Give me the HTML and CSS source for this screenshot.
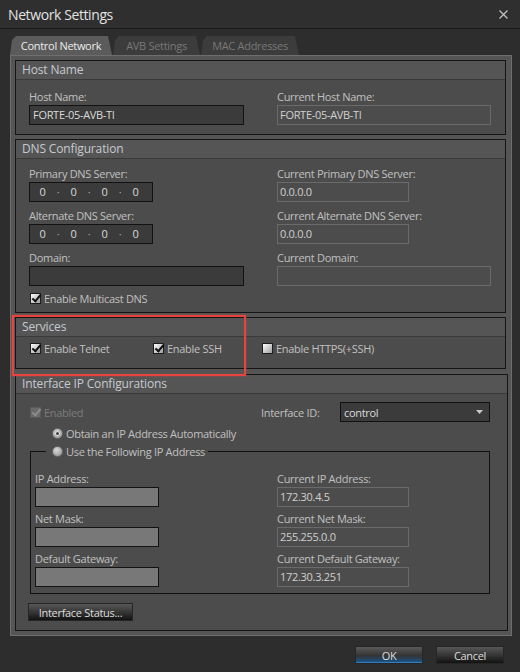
FILE: index.html
```html
<!DOCTYPE html>
<html lang="en">
<head>
    <meta charset="UTF-8">
    <meta name="viewport" content="width=device-width, initial-scale=1.0">
    <title>Network Settings</title>
    <link rel="stylesheet" href="styles.css">
</head>
<body>
<div class="window">
    <div class="titlebar">
        <span class="title">Network Settings</span>
        <svg class="close" width="9" height="9" viewBox="0 0 9 9"><path d="M0.5 0.5L8.5 8.5M8.5 0.5L0.5 8.5" stroke="#c4c4c4" stroke-width="1.2"/></svg>
    </div>

    <div class="tabs">
        <div class="tab active">Control Network</div>
        <div class="tab">AVB Settings</div>
        <div class="tab">MAC Addresses</div>
    </div>

    <div class="panel">
        <!-- Host Name -->
        <section class="group">
            <div class="group-title">Host Name</div>
            <div class="group-body cols host">
                <div class="field">
                    <label>Host Name:</label>
                    <div class="input edit long">FORTE-05-AVB-TI</div>
                </div>
                <div class="field">
                    <label>Current Host Name:</label>
                    <div class="input ro long-r">FORTE-05-AVB-TI</div>
                </div>
            </div>
        </section>

        <!-- DNS Configuration -->
        <section class="group">
            <div class="group-title">DNS Configuration</div>
            <div class="group-body cols dns">
                <div class="col">
                    <div class="field">
                        <label>Primary DNS Server:</label>
                        <div class="input edit ip"><span>0</span><i>·</i><span>0</span><i>·</i><span>0</span><i>·</i><span>0</span></div>
                    </div>
                    <div class="field">
                        <label>Alternate DNS Server:</label>
                        <div class="input edit ip"><span>0</span><i>·</i><span>0</span><i>·</i><span>0</span><i>·</i><span>0</span></div>
                    </div>
                    <div class="field">
                        <label>Domain:</label>
                        <div class="input edit long"></div>
                    </div>
                    <div class="check on mdns"><span class="box"></span>Enable Multicast DNS</div>
                </div>
                <div class="col">
                    <div class="field">
                        <label>Current Primary DNS Server:</label>
                        <div class="input ro short">0.0.0.0</div>
                    </div>
                    <div class="field">
                        <label>Current Alternate DNS Server:</label>
                        <div class="input ro short">0.0.0.0</div>
                    </div>
                    <div class="field">
                        <label>Current Domain:</label>
                        <div class="input ro long-r"></div>
                    </div>
                </div>
            </div>
        </section>

        <!-- Services -->
        <section class="group services">
            <div class="group-title">Services</div>
            <div class="group-body svc">
                <div class="check on"><span class="box"></span>Enable Telnet</div>
                <div class="check on"><span class="box"></span>Enable SSH</div>
                <div class="check"><span class="box"></span>Enable HTTPS(+SSH)</div>
            </div>
            <div class="highlight"></div>
        </section>

        <!-- Interface IP Configurations -->
        <section class="group iface">
            <div class="group-title">Interface IP Configurations</div>
            <div class="group-body">
                <div class="iface-row">
                    <div class="check on disabled"><span class="box"></span>Enabled</div>
                    <span class="label">Interface ID:</span>
                    <div class="select">
                        <span>control</span>
                        <svg width="7" height="4" viewBox="0 0 7 4"><path d="M0 0H7L3.5 4Z" fill="#c8c8c8"/></svg>
                    </div>
                </div>
                <div class="radio-row"><span class="radio on"></span>Obtain an IP Address Automatically</div>
                <fieldset class="static">
                    <legend><span class="radio"></span>Use the Following IP Address</legend>
                    <div class="cols static-cols">
                        <div class="col">
                            <div class="field">
                                <label>IP Address:</label>
                                <div class="input off">&nbsp;</div>
                            </div>
                            <div class="field">
                                <label>Net Mask:</label>
                                <div class="input off">&nbsp;</div>
                            </div>
                            <div class="field">
                                <label>Default Gateway:</label>
                                <div class="input off">&nbsp;</div>
                            </div>
                        </div>
                        <div class="col">
                            <div class="field">
                                <label>Current IP Address:</label>
                                <div class="input ro short">172.30.4.5</div>
                            </div>
                            <div class="field">
                                <label>Current Net Mask:</label>
                                <div class="input ro short">255.255.0.0</div>
                            </div>
                            <div class="field">
                                <label>Current Default Gateway:</label>
                                <div class="input ro short">172.30.3.251</div>
                            </div>
                        </div>
                    </div>
                </fieldset>
                <button class="btn status">Interface Status...</button>
            </div>
        </section>
    </div>

    <div class="footer">
        <button class="btn ok">OK</button>
        <button class="btn">Cancel</button>
    </div>
</div>
</body>
</html>
```

FILE: styles.css
```css
body {
    margin: 0;
    background-color: #2d2d2d;
    font-family: "Open Sans", "Noto Sans", sans-serif;
    font-size: 11px;
    letter-spacing: -0.3px;
    color: #c0c0c0;
}

.window {
    width: 520px;
    height: 672px;
    background-color: #2d2d2d;
    position: relative;
    overflow: hidden;
}

/* title bar */
.titlebar {
    height: 28px;
    border-bottom: 1px solid #1a1a1a;
    background-color: #2f2f2f;
    display: flex;
    align-items: center;
    justify-content: space-between;
    padding: 0 12px 0 8px;
}

.title {
    font-size: 14px;
    letter-spacing: -0.4px;
    color: #e2e2e2;
}

/* tabs */
.tabs {
    display: flex;
    gap: 1px;
    padding: 7px 0 0 10px;
}

.tab {
    height: 19px;
    line-height: 19px;
    text-align: center;
    background-color: #3c3c3c;
    color: #787878;
    clip-path: polygon(0 100%, 2px 4px, 6px 0, calc(100% - 4px) 0, 100% 100%);
}

.tab:nth-child(1) { width: 102px; }
.tab:nth-child(2) { width: 87px; }
.tab:nth-child(3) { width: 98px; }

.tab.active {
    background-color: #5b5b5b;
    color: #ececec;
}

/* tab panel */
.panel {
    margin: 0 8px 0 10px;
    border: 1px solid #6e6e6e;
    background-color: #555;
    padding: 4px 5px 4px 4px;
    display: flex;
    flex-direction: column;
    gap: 4px;
}

.group {
    border: 1px solid #151515;
    background-color: #4c4c4c;
}

.group-title {
    height: 18px;
    line-height: 18px;
    padding-left: 6px;
    border-bottom: 1px solid #3a3a3a;
    background-color: #555;
    font-size: 12px;
    letter-spacing: -0.15px;
    color: #c6cad0;
}

.group-body {
    padding: 8px 13px 9px;
}

.cols {
    display: grid;
    grid-template-columns: 248px 1fr;
}

.col {
    display: flex;
    flex-direction: column;
    gap: 5px;
}

.dns {
    padding: 6px 13px 6px;
}

/* fields */
.field label,
.label {
    display: block;
    height: 17px;
    line-height: 17px;
}

.input {
    box-sizing: border-box;
    height: 20px;
    line-height: 18px;
    padding: 0 3px;
    color: #dadada;
    white-space: nowrap;
}

.input.edit {
    background-color: #3b3b3b;
    border: 1px solid #121212;
}

.input.ro {
    background-color: #4c4c4c;
    border: 1px solid #6a6a6a;
    padding: 0 2px;
    color: #d0d0d0;
}

.input.off {
    width: 124px;
    background-color: #787878;
    border: 1px solid #141414;
}

.long { width: 215px; }
.long-r { width: 214px; }
.short { width: 132px; }

.input.ip {
    width: 124px;
    display: flex;
    padding: 0 3px 0 0;
}

.input.ip span {
    width: 25px;
    text-align: center;
}

.input.ip i {
    width: 6px;
    text-align: center;
    font-style: normal;
    color: #a8a8a8;
}

/* checkboxes */
.check {
    display: flex;
    align-items: center;
    gap: 3px;
    height: 16px;
    white-space: nowrap;
}

.box {
    width: 11px;
    height: 11px;
    box-sizing: border-box;
    border: 1px solid #1e1e1e;
    background: linear-gradient(135deg, #ffffff, #9c9c9c);
    position: relative;
}

.check.on .box::after {
    content: "";
    position: absolute;
    left: 3px;
    top: -1px;
    width: 3px;
    height: 7px;
    border: solid #111;
    border-width: 0 2px 2px 0;
    transform: rotate(40deg);
}

.check.disabled {
    color: #7c7c7c;
}

.check.disabled .box {
    background: #6a6a6a;
    border-color: #5a5a5a;
}

.check.disabled .box::after {
    border-color: #8c8c8c;
}

.mdns {
    margin: -1px 0 0 1px;
}

/* services */
.services {
    position: relative;
}

.svc {
    display: grid;
    grid-template-columns: 123px 109px 1fr;
    padding: 3px 13px 12px 14px;
}

.highlight {
    position: absolute;
    left: -4px;
    top: -3px;
    width: 234px;
    height: 61px;
    box-sizing: border-box;
    border: 2px solid #e8433f;
    box-shadow: 0 0 2px rgba(232, 67, 63, 0.6);
}

/* interface */
.iface {
    margin: 1px -2px 0 0;
}

.iface-row {
    display: grid;
    grid-template-columns: 232px 79px 150px;
    align-items: center;
    height: 20px;
}

.iface-row .check {
    margin-left: 1px;
}

.select {
    box-sizing: border-box;
    height: 20px;
    background-color: #3b3b3b;
    border: 1px solid #121212;
    display: flex;
    align-items: center;
    justify-content: space-between;
    padding: 0 6px 0 3px;
    color: #dadada;
}

.radio-row {
    display: flex;
    align-items: center;
    gap: 3px;
    height: 16px;
    margin-top: 3px;
    padding-left: 23px;
}

.radio {
    width: 11px;
    height: 11px;
    box-sizing: border-box;
    border-radius: 50%;
    border: 1px solid #6a6a6a;
    background: radial-gradient(circle at 40% 35%, #d8d8d8, #8e8e8e);
    position: relative;
}

.radio.on::after {
    content: "";
    position: absolute;
    left: 2px;
    top: 2px;
    width: 5px;
    height: 5px;
    border-radius: 50%;
    background-color: #3a3a3a;
    box-shadow: 0 0 0 1px #eee inset;
}

.static {
    box-sizing: border-box;
    width: 460px;
    margin: 2px 0 0 1px;
    border: 1px solid #111;
    padding: 11px 4px 6px 4px;
}

.static legend {
    display: flex;
    align-items: center;
    gap: 3px;
    height: 16px;
    margin-left: 11px;
    padding: 0 3px 0 6px;
}

.static-cols {
    grid-template-columns: 242px 1fr;
}

.static .col {
    gap: 3px;
}

/* buttons */
.btn {
    font-family: inherit;
    font-size: 11px;
    letter-spacing: -0.3px;
    color: #dcdcdc;
    height: 18px;
    padding: 0;
    border: 1px solid #262626;
    background: linear-gradient(#575757, #333 55%, #121212);
    cursor: pointer;
}

.status {
    width: 105px;
    margin: 9px 0 0 -1px;
    display: block;
}

.footer {
    display: flex;
    justify-content: flex-end;
    gap: 13px;
    padding: 10px 16px 0 0;
}

.footer .btn {
    width: 68px;
}

.btn.ok {
    background: linear-gradient(#5a5a5a, #343434 55%, #1d4f7c 90%, #3c8fd6);
}
```
